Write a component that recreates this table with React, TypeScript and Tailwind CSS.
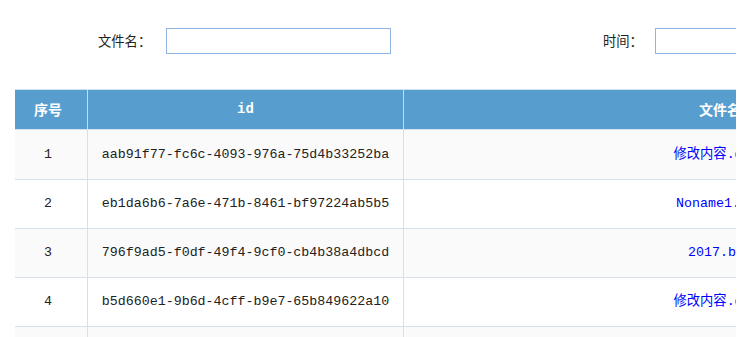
import React from "react";

type FileRow = { no: number; id: string; name: string };

const rows: FileRow[] = [
  { no: 1, id: "aab91f77-fc6c-4093-976a-75d4b33252ba", name: "修改内容.docx" },
  { no: 2, id: "eb1da6b6-7a6e-471b-8461-bf97224ab5b5", name: "Noname1.txt" },
  { no: 3, id: "796f9ad5-f0df-49f4-9cf0-cb4b38a4dbcd", name: "2017.bmp" },
  { no: 4, id: "b5d660e1-9b6d-4cff-b9e7-65b849622a10", name: "修改内容.docx" },
  { no: 5, id: "", name: "" },
];

const font = "font-['Liberation_Mono','Noto_Sans_CJK_SC',monospace]";

export default function App() {
  return (
    <div className={`w-[736px] h-[337px] overflow-hidden bg-white text-[13.3px] text-[#222] ${font}`}>
      <div className="w-[1100px] pt-[28px]">
        {/* search bar */}
        <div className="flex h-[26px] items-center">
          <span className="ml-[98px] w-[68px] font-['Noto_Sans_CJK_SC',sans-serif]">文件名：</span>
          <input className="h-[26px] w-[225px] border border-[#90b5e5] outline-none" />
          <span className="ml-[212px] w-[52px] font-['Noto_Sans_CJK_SC',sans-serif]">时间：</span>
          <input className="h-[26px] w-[225px] border border-[#90b5e5] outline-none" />
        </div>

        {/* file table */}
        <div className="ml-[15px] mt-[35px] w-[1021px] border-t border-[#d7deec]">
          <div className="flex h-[40px] border-b border-[#d7deec] bg-[#579ecf] font-bold text-[14px] text-white">
            <div className="flex w-[73px] items-center justify-center border-r border-[#c9dcee] pr-[6px] font-['Noto_Sans_CJK_SC',sans-serif]">
              序号
            </div>
            <div className="flex w-[316px] items-center justify-center border-r border-[#c9dcee]">id</div>
            <div className="flex flex-1 items-center justify-center font-['Noto_Sans_CJK_SC',sans-serif]">
              文件名
            </div>
          </div>
          {rows.map((r, i) => (
            <div
              key={r.no}
              className={`flex border-b border-[#d7deec] ${i === 0 ? "h-[50px]" : "h-[49px]"} ${
                i % 2 === 0 ? "bg-[#fafafa]" : "bg-white"
              }`}
            >
              <div className="flex w-[73px] items-center justify-center border-r border-[#d7deec] pr-[6px]">
                {r.no}
              </div>
              <div className="flex w-[316px] items-center justify-center border-r border-[#d7deec]">{r.id}</div>
              <div className="flex flex-1 items-center justify-center">
                <a className="text-[#0000ff]">{r.name}</a>
              </div>
            </div>
          ))}
        </div>
      </div>
    </div>
  );
}
